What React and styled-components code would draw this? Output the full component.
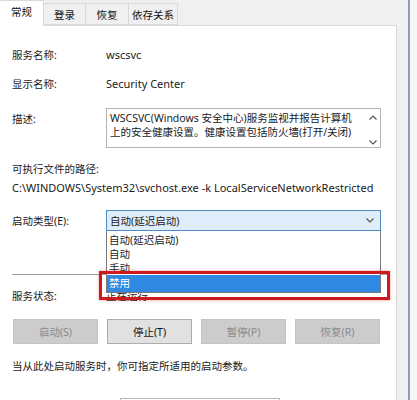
import React from "react";
import styled, { createGlobalStyle } from "styled-components";

const Global = createGlobalStyle`
  html, body { margin: 0; padding: 0; background: #f0f0f0; }
  #root { width: 417px; height: 400px; overflow: hidden; }
  * { box-sizing: border-box; }
`;

const Window = styled.div`
  display: flex;
  width: 417px;
  height: 400px;
  font-family: "Noto Sans", "Noto Sans CJK SC", sans-serif;
  font-size: 10.5px;
  color: #1a1a1a;
`;

const Main = styled.div`
  width: 397px;
  display: flex;
  flex-direction: column;
`;

const Frame = styled.div`
  flex: 1;
  display: flex;
  background: #f0f0f0;
`;

const FrameGap = styled.div`
  width: 11px;
`;

const FrameLine = styled.div`
  width: 2px;
  background: #8f9daf;
`;

const FrameEdge = styled.div`
  flex: 1;
  background: #f7f7f7;
`;

const TabBar = styled.div`
  height: 31px;
  display: flex;
  align-items: flex-end;
  position: relative;
  z-index: 2;
`;

const Tab = styled.div`
  width: ${(p) => p.$w}px;
  height: ${(p) => (p.$active ? 26 : 22)}px;
  margin-bottom: ${(p) => (p.$active ? -1 : 0)}px;
  background: ${(p) => (p.$active ? "#ffffff" : "#f0f0f0")};
  border: 1px solid #d9d9d9;
  border-left: 0;
  border-bottom: ${(p) => (p.$active ? "none" : "1px solid #d9d9d9")};
  display: flex;
  justify-content: center;
  align-items: flex-start;
  padding-top: 4px;
  line-height: 14px;
  color: #111;
`;

const Content = styled.div`
  flex: 1;
  background: #ffffff;
  border-top: 1px solid #d9d9d9;
  border-right: 1px solid #d9d9d9;
  padding: 21px 0 0 12px;
  display: flex;
  flex-direction: column;
`;

const InfoRow = styled.div`
  display: grid;
  grid-template-columns: 94px 1fr;
  align-items: ${(p) => p.$align || "center"};
  margin-top: ${(p) => p.$mt || 0}px;
  line-height: 16px;
`;

const Label = styled.div`
  white-space: nowrap;
  padding-top: ${(p) => p.$pt || 0}px;
`;

const Value = styled.div`
  white-space: nowrap;
  font-size: ${(p) => p.$fs || 10.5}px;
`;

const TextLine = styled.div`
  margin-top: ${(p) => p.$mt || 0}px;
  line-height: 16px;
  white-space: nowrap;
  font-size: ${(p) => p.$fs || 10.5}px;
`;

const DescBox = styled.div`
  width: 275px;
  height: 40px;
  border: 1px solid #b4b4b4;
  display: flex;
  overflow: hidden;
`;

const DescText = styled.div`
  flex: 1;
  padding: 2px 0 0 3px;
  line-height: 14px;
  white-space: nowrap;
  overflow: hidden;
`;

const ScrollCol = styled.div`
  width: 15px;
  display: flex;
  flex-direction: column;
  justify-content: space-between;
  align-items: center;
  padding: 6px 0 2px;
  color: #555;
`;

const SelectWrap = styled.div`
  position: relative;
  width: 275px;
`;

const SelectBox = styled.div`
  height: 21px;
  border: 1px solid #4e8bc4;
  background: #dfecfa;
  display: flex;
  align-items: center;
  justify-content: space-between;
  padding: 0 6px 0 3px;
  line-height: 14px;
`;

const DropList = styled.div`
  position: absolute;
  top: 21px;
  left: 0;
  width: 275px;
  background: #ffffff;
  border: 1px solid #7a7a7a;
  border-top: none;
  z-index: 3;
  padding-top: 2px;
`;

const DropItem = styled.div`
  height: ${(p) => (p.$selected ? 17 : 14)}px;
  line-height: ${(p) => (p.$selected ? 17 : 14)}px;
  padding-left: 2px;
  background: ${(p) => (p.$selected ? "#2f89e3" : "transparent")};
  color: ${(p) => (p.$selected ? "#ffffff" : "#1a1a1a")};
`;

const Highlight = styled.div`
  position: absolute;
  left: -7px;
  top: 61px;
  width: 291px;
  height: 29px;
  border: 3px solid #cc1a1f;
  box-shadow: 0 0 3px rgba(200, 30, 30, 0.45);
  z-index: 5;
  pointer-events: none;
`;

const Separator = styled.div`
  margin-top: 43px;
  width: 375px;
  height: 1px;
  background: #a0a0a0;
`;

const ButtonRow = styled.div`
  display: flex;
  gap: 9px;
  margin-top: 15px;
  padding-left: 1px;
`;

const Btn = styled.div`
  width: 85px;
  height: 25px;
  display: flex;
  align-items: center;
  justify-content: center;
  border: 1px solid ${(p) => (p.$disabled ? "#c4c4c4" : "#adadad")};
  background: ${(p) => (p.$disabled ? "#cccccc" : "#e1e1e1")};
  color: ${(p) => (p.$disabled ? "#8a8a8a" : "#111")};
`;

const BottomBox = styled.div`
  margin: 24px 0 0 108px;
  width: 160px;
  height: 22px;
  border: 1px solid #b8b8b8;
  flex-shrink: 0;
`;

const Chevron = ({ up }) => (
  <svg width="8" height="5" viewBox="0 0 8 5">
    <polyline
      points={up ? "0.5,4.5 4,1 7.5,4.5" : "0.5,0.5 4,4 7.5,0.5"}
      fill="none"
      stroke="#555"
      strokeWidth="1.2"
    />
  </svg>
);

export default function App() {
  return (
    <>
      <Global />
      <Window>
        <Main>
          <TabBar>
            <Tab $active $w={44}>常规</Tab>
            <Tab $w={42}>登录</Tab>
            <Tab $w={43}>恢复</Tab>
            <Tab $w={49}>依存关系</Tab>
          </TabBar>
          <Content>
            <InfoRow>
              <Label>服务名称:</Label>
              <Value $fs={11}>wscsvc</Value>
            </InfoRow>
            <InfoRow $mt={13}>
              <Label>显示名称:</Label>
              <Value $fs={11}>Security Center</Value>
            </InfoRow>
            <InfoRow $mt={16} $align="start">
              <Label $pt={3}>描述:</Label>
              <DescBox>
                <DescText>
                  WSCSVC(Windows 安全中心)服务监视并报告计算机
                  <br />
                  上的安全健康设置。健康设置包括防火墙(打开/关闭)
                </DescText>
                <ScrollCol>
                  <Chevron up />
                  <Chevron />
                </ScrollCol>
              </DescBox>
            </InfoRow>
            <TextLine $mt={13}>可执行文件的路径:</TextLine>
            <TextLine $mt={3} $fs={11}>
              C:\WINDOWS\System32\svchost.exe -k LocalServiceNetworkRestricted
            </TextLine>
            <InfoRow $mt={14}>
              <Label>启动类型(E):</Label>
              <SelectWrap>
                <SelectBox>
                  <span>自动(延迟启动)</span>
                  <Chevron />
                </SelectBox>
                <DropList>
                  <DropItem>自动(延迟启动)</DropItem>
                  <DropItem>自动</DropItem>
                  <DropItem>手动</DropItem>
                  <DropItem $selected>禁用</DropItem>
                </DropList>
                <Highlight />
              </SelectWrap>
            </InfoRow>
            <Separator />
            <InfoRow $mt={13}>
              <Label>服务状态:</Label>
              <Value>正在运行</Value>
            </InfoRow>
            <ButtonRow>
              <Btn $disabled>启动(S)</Btn>
              <Btn>停止(T)</Btn>
              <Btn $disabled>暂停(P)</Btn>
              <Btn $disabled>恢复(R)</Btn>
            </ButtonRow>
            <TextLine $mt={14}>当从此处启动服务时，你可指定所适用的启动参数。</TextLine>
            <BottomBox />
          </Content>
        </Main>
        <Frame>
          <FrameGap />
          <FrameLine />
          <FrameEdge />
        </Frame>
      </Window>
    </>
  );
}
